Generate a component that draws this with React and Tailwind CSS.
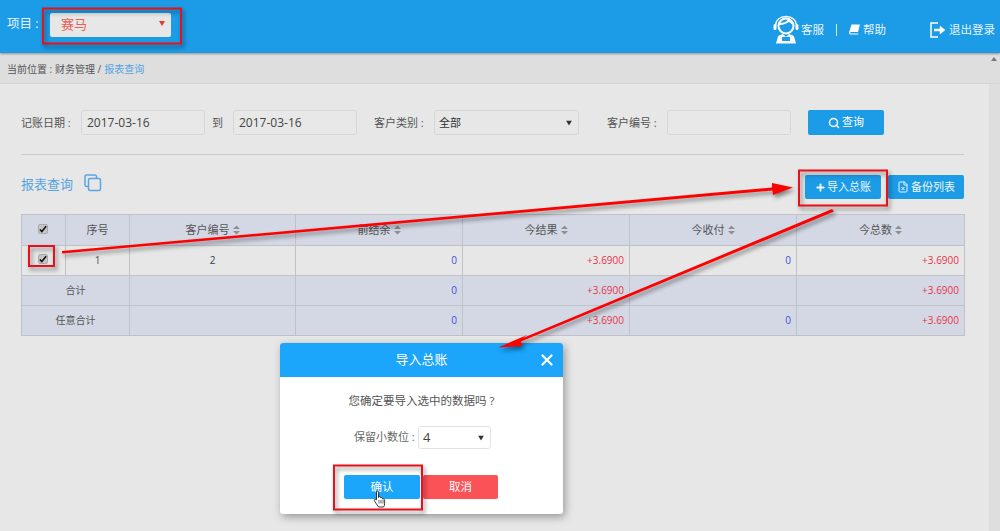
import React from 'react';
import { Search, Plus, FileX, X } from 'lucide-react';

const columns = [
  { label: '序号', width: 'w-[64px]' },
  { label: '客户编号', width: 'w-[166px]', sort: true },
  { label: '前结余', width: 'w-[167px]', sort: true },
  { label: '今结果', width: 'w-[167px]', sort: true },
  { label: '今收付', width: 'w-[167px]', sort: true },
  { label: '今总数', width: 'w-[168px]', sort: true },
];

const cell = 'border border-[#bfc2c6] h-[30px] p-0 font-normal';
const blue = 'text-right pr-[5px] text-[#3b4fe0] text-[10px]';
const red = 'text-right pr-[5px] text-[#e8344a] text-[10px]';

const SortCaret = () => (
  <svg width="7" height="10" viewBox="0 0 7 10" className="inline-block ml-[3px] align-[-1px]">
    <path d="M3.5 0.5L7 4H0zM3.5 9.5L0 6h7z" fill="#8d8f92" />
  </svg>
);

const Checkbox = () => (
  <span className="relative -top-[2px] -left-[1px] inline-flex items-center justify-center w-[10px] h-[10px] rounded-[2px] bg-[#c4c5c6] border border-[#a8a9aa] align-middle">
    <svg width="9" height="8" viewBox="0 0 9 8">
      <path d="M1 4.5L3.2 6.8L8 1" fill="none" stroke="#111" strokeWidth="1.8" />
    </svg>
  </span>
);

const Triangle = ({ color = '#333', className = 'top-1/2 -translate-y-1/2' }) => (
  <svg width="6" height="5" viewBox="0 0 6 5" className={`absolute right-[6px] ${className}`}>
    <path d="M0 0h6L3 5z" fill={color} />
  </svg>
);

const Field = ({ value, className = '' }) => (
  <div className={`h-[25px] border border-[#d6d7d6] rounded-[3px] bg-[#e7e8e7] flex items-center pl-[5px] text-[12px] text-[#444] ${className}`}>
    {value}
  </div>
);

const AgentIcon = () => (
  <svg width="26" height="29" viewBox="0 0 26 29" fill="none" className="text-white">
    <circle cx="13" cy="11" r="7.5" stroke="currentColor" strokeWidth="2" />
    <path d="M6 9c3 0 8-1 10-4 1 2 3 3 4 4" stroke="currentColor" strokeWidth="2" />
    <path d="M2.5 11C2.500 5 7 1.500 13 1.500S23.500 5 23.500 11" stroke="currentColor" strokeWidth="1.300" />
    <rect x="0.500" y="9" width="3" height="6" rx="1.500" fill="currentColor" />
    <rect x="22.500" y="9" width="3" height="6" rx="1.500" fill="currentColor" />
    <path d="M3 28.500l2-7c1-1.500 3-2 5-2.500l3 3 3-3c2 .5 4 1 5 2.500l2 7z" fill="currentColor" />
    <path d="M9 22h8v4H9z" fill="#1c9be6" />
  </svg>
);

const BookIcon = () => (
  <svg width="11" height="11" viewBox="0 0 11 11" fill="white">
    <path d="M2.500 0.500H11L9 8H2.200C1.500 8 1.200 8.500 1.300 9c.1.400.5.600 1 .6H9.500L9.300 10.500H1.500C.5 10.500 0 9.500 0 8.500z" />
  </svg>
);

const LogoutIcon = () => (
  <svg width="16" height="16" viewBox="0 0 16 16" fill="none" stroke="white">
    <path d="M8 1H1v14h7" strokeWidth="1.500" />
    <path d="M4 8h7" strokeWidth="2.500" />
    <path d="M10 4l5 4-5 4z" fill="white" strokeWidth="0.500" />
  </svg>
);

const HandCursor = () => (
  <svg width="14" height="19" viewBox="0 0 14 19" className="absolute left-[29px] top-[15px]">
    <path
      d="M3.500 1.500c.8-.8 2-.4 2 .8v5.200l.3-1c1-.5 1.800 0 1.800 1l.1.200c1-.5 1.800 0 1.800 1l.2.300c1-.4 1.900.2 1.900 1.200v3.600c0 1.500-.5 2.500-1 3.200H5.500L1.800 11.500c-.8-1-.6-1.800.2-2.200.6-.2 1.100 0 1.500.5z"
      fill="white"
      stroke="#222"
      strokeWidth="0.900"
    />
    <path d="M6 10v3.500M8 10v3.500M10 10v3.500" stroke="#222" strokeWidth="0.700" />
  </svg>
);

const Annotations = () => (
  <svg
    width="1000"
    height="531"
    viewBox="0 0 1000 531"
    className="absolute left-0 top-0 pointer-events-none drop-shadow-[2px_3px_2px_rgba(0,0,0,0.45)]"
    fill="none"
  >
    <rect x="43" y="8.500" width="138" height="35" stroke="#e8101a" strokeWidth="2" />
    <rect x="799" y="170.500" width="88" height="35" stroke="#e8101a" strokeWidth="2" />
    <rect x="29" y="246" width="25" height="20" stroke="#e8101a" strokeWidth="2" />
    <rect x="334" y="465.500" width="88" height="44" stroke="#e8101a" strokeWidth="2" />
    <path d="M62 251L772 187.500L772 183L793 187.500L773 195L772.500 190.500L62 253.500z" fill="#f00" />
    <path d="M832 209L523 338L527 335L498 347.500L522 346L521 341.500L834 211.500z" fill="#f00" />
  </svg>
);

const Dialog = () => (
  <div className="absolute left-[280px] top-[343px] w-[283px] h-[171px] bg-white rounded-[3px] shadow-[2px_3px_8px_rgba(0,0,0,0.35)] overflow-hidden">
    <div className="relative h-[34px] bg-[#1ba5fb] flex items-center justify-center text-white text-[13px]">
      导入总账
      <X className="absolute right-[7px] top-[8px]" size={18} strokeWidth={3} color="white" />
    </div>
    <div className="pt-[14px] text-center text-[11.5px] text-[#555] leading-[20px]">您确定要导入选中的数据吗 ?</div>
    <div className="mt-[15px] flex items-center h-[23px]">
      <span className="ml-[74px] w-[64px] text-[11px] text-[#666] whitespace-nowrap">保留小数位 :</span>
      <div className="relative w-[73px] h-[23px] border border-[#e2e2e2] rounded-[3px] flex items-center pl-[4px] text-[13px] text-[#444]">
        4
        <Triangle />
      </div>
    </div>
    <div className="mt-[26px] flex pl-[64px] gap-[3px]">
      <div className="relative w-[76px] h-[24px] bg-[#1ba5fb] rounded-[2px] flex items-center justify-center text-white text-[11.5px]">
        确认
        <HandCursor />
      </div>
      <div className="w-[75px] h-[24px] bg-[#fb5257] rounded-[2px] flex items-center justify-center text-white text-[11.5px]">取消</div>
    </div>
  </div>
);

export default function App() {
  return (
    <div
      className="relative w-[1000px] h-[531px] overflow-hidden bg-[#e6e7e6] text-[#555]"
      style={{ fontFamily: '"Open Sans", "Noto Sans CJK SC", sans-serif' }}
    >
      <header className="h-[53px] bg-[#1c9be6] flex items-center shadow-[0_1px_2px_rgba(0,0,0,0.35)] relative">
        <span className="ml-[7px] text-[12.5px] text-[#e8f4fc] w-[43px] -mt-[4px] whitespace-nowrap">项目 :</span>
        <div className="relative w-[121px] h-[24px] -mt-[4px] bg-[#e6e7e6] rounded-[2px] flex items-center pl-[11px] text-[13px] text-[#e8604f]">
          赛马
          <Triangle color="#e23c2c" className="top-[8px]" />
        </div>
        <div className="ml-auto mr-[5px] flex items-center text-[11.5px] text-[#e8f4fc] mt-[6px]">
          <AgentIcon />
          <span className="ml-[2px]">客服</span>
          <span className="ml-[12px] w-px h-[12px] bg-[#cfe8f8]" />
          <span className="ml-[12px]"><BookIcon /></span>
          <span className="ml-[3px]">帮助</span>
          <span className="ml-[44px]"><LogoutIcon /></span>
          <span className="ml-[3px]">退出登录</span>
        </div>
      </header>

      <div className="h-[31px] bg-[#dedede] border-b border-[#d6d6d6] pl-[7px] pt-[3px] flex items-center text-[10px] text-[#555]">
        <span className="w-[48px] whitespace-nowrap">当前位置 :</span>
        财务管理 /
        <span className="ml-[3px] text-[#55a4e0]">报表查询</span>
      </div>

      <div className="flex h-[447px]">
        <main className="w-[989px] pl-[21px] pr-[25px]">
          <div className="h-[71px] pt-[26px] border-b border-[#c9caca] flex items-start text-[11px] text-[#555]">
            <span className="w-[60px] leading-[25px] whitespace-nowrap">记账日期 :</span>
            <Field value="2017-03-16" className="w-[124px]" />
            <span className="ml-[7px] w-[21px] leading-[25px]">到</span>
            <Field value="2017-03-16" className="w-[124px]" />
            <span className="ml-[17px] w-[60px] leading-[25px] whitespace-nowrap">客户类别 :</span>
            <div className="relative w-[145px] h-[25px] border border-[#d6d7d6] rounded-[3px] flex items-center pl-[4px] text-[11px] text-[#333]">
              <span className="mt-[1px]">全部</span>
              <Triangle />
            </div>
            <span className="ml-[28px] w-[60px] leading-[25px] whitespace-nowrap">客户编号 :</span>
            <Field value="" className="w-[124px]" />
            <div className="ml-[17px] w-[76px] h-[25px] bg-[#1c9be6] rounded-[2px] flex items-center justify-center gap-[2px] text-white text-[11px]">
              <Search size={12} strokeWidth={3} />
              查询
            </div>
          </div>

          <div className="h-[59px] flex items-start pt-[20px]">
            <span className="-mt-[1px] text-[13px] text-[#55a4e0] leading-[20px]">报表查询</span>
            <svg width="18" height="18" viewBox="0 0 18 18" fill="none" stroke="#5aa6e6" strokeWidth="1.500" className="ml-[11px] -mt-[1px]">
              <path d="M4 12.500H2.500a1.500 1.500 0 0 1-1.500-1.500V2.500A1.500 1.500 0 0 1 2.500 1H11a1.500 1.500 0 0 1 1.500 1.500V4" />
              <rect x="4.500" y="4.500" width="12" height="12" rx="1.500" />
            </svg>
            <div className="ml-auto flex gap-[7px]">
              <div className="w-[76px] h-[24px] bg-[#1c9be6] rounded-[2px] flex items-center justify-center gap-[1px] text-[#eef7fd] text-[11px]">
                <Plus size={11} strokeWidth={4} />
                导入总账
              </div>
              <div className="w-[76px] h-[24px] bg-[#1c9be6] rounded-[2px] flex items-center justify-center gap-[2px] text-[#eef7fd] text-[11px]">
                <FileX size={12} />
                备份列表
              </div>
            </div>
          </div>

          <table className="table-fixed border-collapse w-[943px] text-[11px] text-[#555] text-center">
            <colgroup>
              <col className="w-[44px]" />
              {columns.map((col) => (
                <col key={col.label} className={col.width} />
              ))}
            </colgroup>
            <thead>
              <tr className="bg-[#d3d8e4]">
                <th className={`${cell} h-[31px]`}><Checkbox /></th>
                {columns.map((col) => (
                  <th key={col.label} className={`${cell} h-[31px]`}>
                    {col.label}
                    {col.sort && <SortCaret />}
                  </th>
                ))}
              </tr>
            </thead>
            <tbody>
              <tr>
                <td className={cell}><Checkbox /></td>
                <td className={`${cell} text-[10px]`}>1</td>
                <td className={`${cell} text-[10px] text-[#333a66]`}>2</td>
                <td className={`${cell} ${blue}`}>0</td>
                <td className={`${cell} ${red}`}>+3.6900</td>
                <td className={`${cell} ${blue}`}>0</td>
                <td className={`${cell} ${red}`}>+3.6900</td>
              </tr>
              <tr className="bg-[#d3d8e4]">
                <td className={`${cell} text-[10px]`} colSpan={2}>合计</td>
                <td className={cell}></td>
                <td className={`${cell} ${blue}`}>0</td>
                <td className={`${cell} ${red}`}>+3.6900</td>
                <td className={cell}></td>
                <td className={`${cell} ${red}`}>+3.6900</td>
              </tr>
              <tr className="bg-[#d3d8e4]">
                <td className={`${cell} text-[10px]`} colSpan={2}>任意合计</td>
                <td className={cell}></td>
                <td className={`${cell} ${blue}`}>0</td>
                <td className={`${cell} ${red}`}>+3.6900</td>
                <td className={`${cell} ${blue}`}>0</td>
                <td className={`${cell} ${red}`}>+3.6900</td>
              </tr>
            </tbody>
          </table>
        </main>
        <div className="w-[11px] bg-[#dedede] relative">
          <svg width="6" height="4" viewBox="0 0 6 4" className="absolute left-[2px] -top-[27px]">
            <path d="M3 0l3 4H0z" fill="#777" />
          </svg>
        </div>
      </div>

      <Dialog />
      <Annotations />
    </div>
  );
}
